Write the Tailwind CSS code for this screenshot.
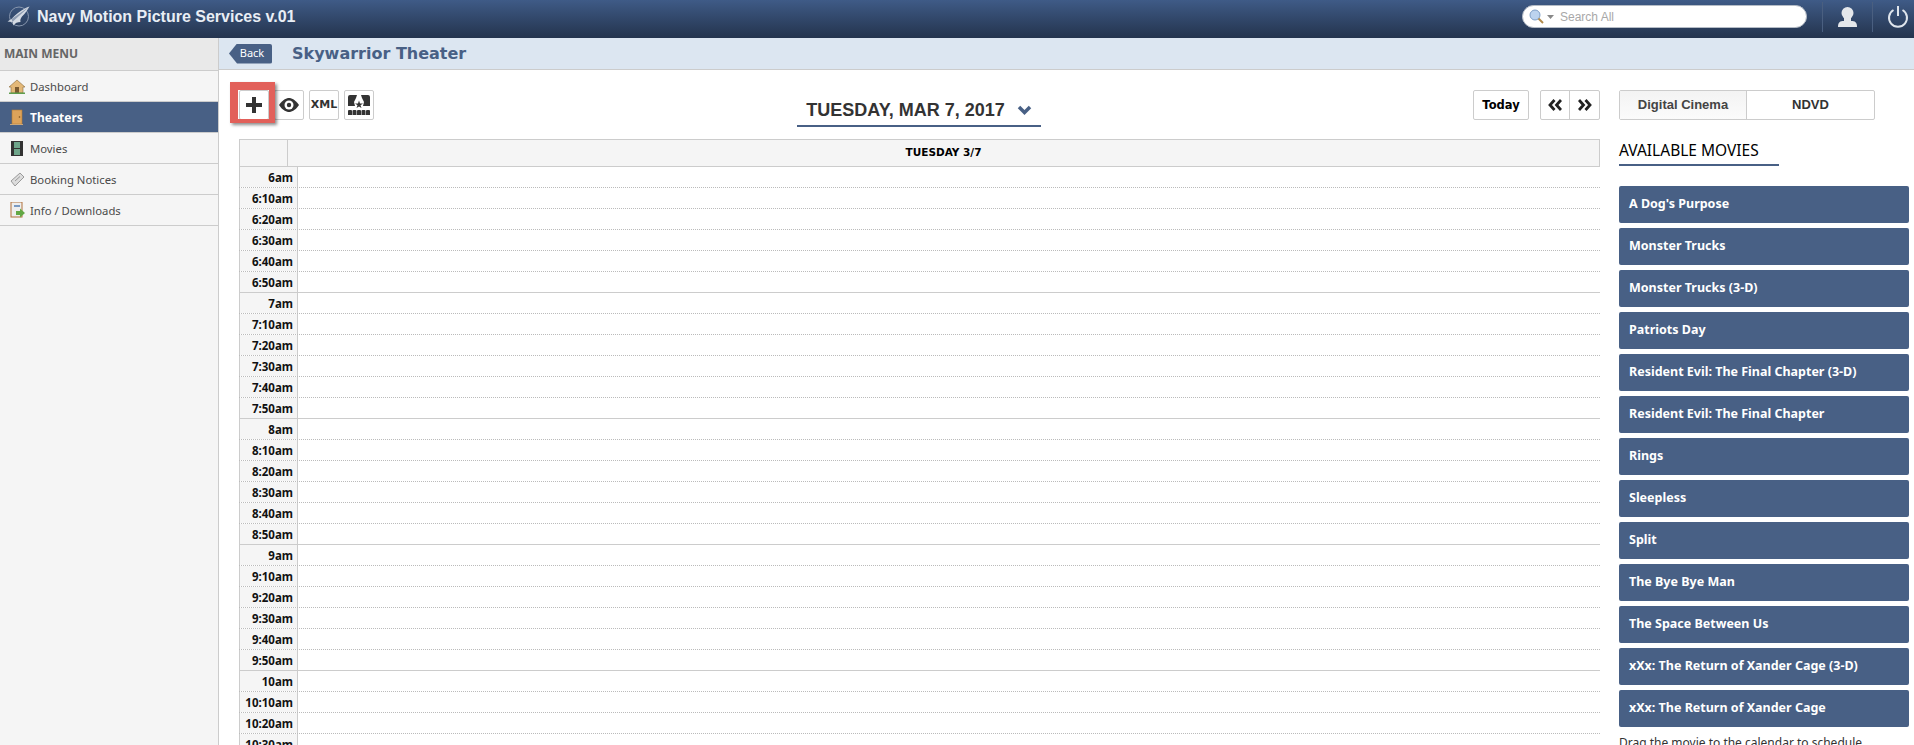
<!DOCTYPE html>
<html lang="en">
<head>
  <meta charset="UTF-8" />
  <title>Navy Motion Picture Services</title>
  <script src="https://cdn.jsdelivr.net/npm/@tailwindcss/browser@4"></script>
</head>
<body class="h-[745px] overflow-hidden bg-white font-['Noto_Sans',sans-serif] text-[#333]">

  <!-- top bar -->
  <header class="h-[38px] pb-[5px] flex items-center bg-gradient-to-b from-[#3f5b87] to-[#24344e]">
    <svg class="ml-[7px] w-[23px] h-[21px]" viewBox="0 0 23 21"><circle cx="12" cy="10.500" r="9.500" fill="none" stroke="#8796ae" stroke-width="1"/><path d="M22.500 0.500 C15 3 8 9 4.500 13 L0.500 15.500 L5.500 16 L6.500 19.500 C8 17 10.500 16 13.500 16 C13 14 13.500 12.500 15 10.500 C18 7.500 20.500 4 22.500 0.500Z" fill="#d5dbe4"/><path d="M22.500 0.500 L7 14.500 L5.500 16 L4.500 13Z" fill="#8f9db3"/></svg>
    <div class="ml-[7px] font-['Liberation_Sans',sans-serif] font-bold text-[16px] text-[#e9eef5]">Navy Motion Picture Services v.01</div>
    <div class="ml-auto w-[285px] h-[23px] flex items-center rounded-full bg-white border border-[#b5bcc6]">
      <svg class="ml-[6px] w-[15px] h-[15px]" viewBox="0 0 15 15"><circle cx="6" cy="6" r="5" fill="#bcd3ee" stroke="#7f9fc6"/><path d="M9.500 9.500 L14 14" stroke="#b08a4a" stroke-width="2"/></svg>
      <svg class="ml-[3px] w-[7px] h-[4px]" viewBox="0 0 7 4"><path d="M0 0H7L3.500 4Z" fill="#888"/></svg>
      <span class="ml-[6px] font-['Liberation_Sans',sans-serif] text-[12px] text-[#a8a8a8]">Search All</span>
    </div>
    <div class="ml-[15px] w-px h-[30px] bg-[#4a5f80]"></div>
    <svg class="ml-[14px] w-[21px] h-[22px]" viewBox="0 0 21 22"><circle cx="10.500" cy="7" r="6" fill="#e4e7eb"/><path d="M7 12 H14 L14 15 C18 15 20 16 20 21 H1 C1 16 3 15 7 15Z" fill="#e4e7eb"/></svg>
    <div class="ml-[14px] w-px h-[30px] bg-[#4a5f80]"></div>
    <svg class="ml-[14px] mr-[5px] w-[22px] h-[22px]" viewBox="0 0 22 22" fill="none" stroke="#dfe5ec" stroke-width="2"><path d="M6.500 4 A9 9 0 1 0 15.500 4"/><path d="M11 0 V10"/></svg>
  </header>

  <div class="flex h-[707px] overflow-hidden">
    <!-- sidebar -->
    <aside class="w-[219px] shrink-0 bg-[#f5f5f5] border-r border-[#ccc] text-[11.300px] text-[#4a4a4a]">
      <div class="h-[33px] flex items-center pl-[4px] bg-[#e9e9e9] border-b border-[#ccc] font-bold text-[12px] text-[#666]">MAIN MENU</div>
      <a class="h-[31px] flex items-center border-b border-[#ccc]">
        <svg class="ml-[9px] w-[16px] h-[15px]" viewBox="0 0 16 15"><path d="M8 1 L0 8 H2 V14 H14 V8 H16Z" fill="#e3b878" stroke="#8a6a3a" stroke-width=".6"/><rect x="6" y="8" width="4" height="6" fill="#7a5a30"/><rect x="0" y="13.500" width="16" height="1.500" fill="#5f9e4e"/></svg>
        <span class="ml-[5px] pt-[2px]">Dashboard</span>
      </a>
      <a class="h-[31px] flex items-center bg-[#486085] border-b border-[#ccc] font-bold text-[12px] text-white">
        <svg class="ml-[10px] w-[13px] h-[16px]" viewBox="0 0 13 16"><rect x="2" y="1" width="10" height="14" fill="#dda35a" stroke="#b27a35" stroke-width=".6"/><circle cx="9.500" cy="8" r=".8" fill="#7a4d1a"/><rect x="0" y="15" width="13" height="1" fill="#c9a77a"/></svg>
        <span class="ml-[7px] pt-[2px]">Theaters</span>
      </a>
      <a class="h-[31px] flex items-center border-b border-[#ccc]">
        <svg class="ml-[11px] w-[12px] h-[15px]" viewBox="0 0 12 15"><rect width="12" height="15" fill="#333"/><rect x="3" y="1" width="6" height="6" fill="#6ea58a"/><rect x="3" y="8" width="6" height="6" fill="#6ea58a"/></svg>
        <span class="ml-[7px] pt-[2px]">Movies</span>
      </a>
      <a class="h-[31px] flex items-center border-b border-[#ccc]">
        <svg class="ml-[10px] w-[15px] h-[15px]" viewBox="0 0 15 15"><path d="M1 9 L10 1 L14 5 L5 14Z" fill="#dcdcdc" stroke="#9a9a9a"/><path d="M5 9 L10 4.500" stroke="#9a9a9a"/></svg>
        <span class="ml-[5px] pt-[2px]">Booking Notices</span>
      </a>
      <a class="h-[31px] flex items-center border-b border-[#ccc]">
        <svg class="ml-[10px] w-[15px] h-[16px]" viewBox="0 0 15 16"><rect x="1" y="0" width="11" height="15" fill="#eee" stroke="#b0703a"/><rect x="4" y="3" width="6" height="2" fill="#7a9ac2"/><path d="M6 9 H10 V6.500 L15 11 L10 15.500 V13 H6Z" fill="#63a845"/></svg>
        <span class="ml-[5px] pt-[2px]">Info / Downloads</span>
      </a>
    </aside>

    <main class="flex-1 min-w-0">
      <!-- title bar -->
      <div class="h-[32px] flex items-center bg-[#dce6f1] border-b border-[#ccc]">
        <div class="ml-[10px] w-[43px] h-[20px] flex items-center justify-center bg-[#486085] rounded-r-[2px] [clip-path:polygon(8px_0,100%_0,100%_100%,8px_100%,0_50%)] pl-[3px] text-[11px] text-white">Back</div>
        <div class="ml-[20px] font-['DejaVu_Sans',sans-serif] font-bold text-[16px] text-[#486085]">Skywarrior Theater</div>
      </div>

      <div class="flex">
        <!-- calendar -->
        <section class="w-[1400px] shrink-0 pl-[20px]">
          <div class="h-[69px] pt-[20px] relative">
            <div class="flex font-['DejaVu_Sans',sans-serif] text-[#333]">
              <button class="w-[30px] h-[30px] flex items-center justify-center rounded-[2px] border border-[#ccc]">
                <svg class="w-[16px] h-[16px]" viewBox="0 0 16 16"><path d="M6 0H10V6H16V10H10V16H6V10H0V6H6Z" fill="#333"/></svg>
              </button>
              <button class="ml-[5px] w-[30px] h-[30px] flex items-center justify-center rounded-[2px] border border-[#ccc]">
                <svg class="w-[20px] h-[14px]" viewBox="0 0 20 14"><path d="M0 7 C4 1 8 0 10 0 C12 0 16 1 20 7 C16 13 12 14 10 14 C8 14 4 13 0 7Z" fill="#333"/><circle cx="10" cy="7" r="4.500" fill="#fff"/><circle cx="10" cy="7" r="2.200" fill="#333"/></svg>
              </button>
              <button class="ml-[5px] w-[30px] h-[30px] flex items-center justify-center rounded-[2px] border border-[#ccc] font-bold text-[11px]">XML</button>
              <button class="ml-[5px] w-[30px] h-[30px] flex items-center justify-center rounded-[2px] border border-[#ccc]">
                <svg class="w-[22px] h-[20px]" viewBox="0 0 22 20" fill="#333"><path d="M2 0 H9 L8 3 L6 7 L7 11 L0 11 V2 Q0 0 2 0Z"/><path d="M20 0 H13 L14 3 L16 7 L15 11 L22 11 V2 Q22 0 20 0Z"/><path d="M11 5.500 L12 8.500 H15 L12.500 10.300 L13.500 13 L11 11.400 L8.500 13 L9.500 10.300 L7 8.500 H10Z"/><path d="M0 20 V16 Q0 15 1 15 H3 Q4 15 4 16 V20Z"/><path d="M4.500 20 V16 Q4.500 15 5.500 15 H7.500 Q8.500 15 8.500 16 V20Z"/><path d="M9 20 V16 Q9 15 10 15 H12 Q13 15 13 16 V20Z"/><path d="M13.500 20 V16 Q13.500 15 14.500 15 H16.500 Q17.500 15 17.500 16 V20Z"/><path d="M18 20 V16 Q18 15 19 15 H21 Q22 15 22 16 V20Z"/></svg>
              </button>
            </div>
            <!-- highlight round the add button -->
            <div class="absolute left-[-9px] top-[12px] w-[45px] h-[41px] border-l-[8px] border-t-[8px] border-r-[6px] border-b-[4px] border-[#e2605a] shadow-[2px_2px_3px_rgba(0,0,0,.45)]"></div>

            <div class="absolute left-[558px] top-[19px] w-[244px] h-[38px] pt-[6px] flex items-center justify-center gap-[12px] border-b-[2px] border-[#486085]">
              <span class="font-['Liberation_Sans',sans-serif] font-bold text-[18px] text-[#333]">TUESDAY, MAR 7, 2017</span>
              <svg class="w-[15px] h-[11px]" viewBox="0 0 15 11"><path d="M2 2 L7.500 7.500 L13 2" fill="none" stroke="#486085" stroke-width="3.500"/></svg>
            </div>

            <div class="absolute left-[1234px] top-[20px] flex font-['DejaVu_Sans',sans-serif] font-bold text-black">
              <button class="w-[56px] h-[30px] pt-[1px] rounded-[2px] border border-[#ccc] text-[11.500px]">Today</button>
              <div class="ml-[11px] flex h-[30px] rounded-[2px] border border-[#ccc]">
                <button class="w-[29px] border-r border-[#ccc] flex items-center justify-center">
                  <svg class="w-[14px] h-[12px]" viewBox="0 0 14 12" fill="none" stroke="#222" stroke-width="2.800"><path d="M6.500 1 L2 6 L6.500 11"/><path d="M13 1 L8.500 6 L13 11"/></svg>
                </button>
                <button class="w-[29px] flex items-center justify-center">
                  <svg class="w-[14px] h-[12px]" viewBox="0 0 14 12" fill="none" stroke="#222" stroke-width="2.800"><path d="M1 1 L5.500 6 L1 11"/><path d="M7.500 1 L12 6 L7.500 11"/></svg>
                </button>
              </div>
            </div>
          </div>

          <div class="w-[1361px] h-[28px] flex bg-[#f5f5f5] border border-[#ccc]">
            <div class="w-[48px] border-r border-[#ccc]"></div>
            <div class="flex-1 flex items-center justify-center font-['DejaVu_Sans',sans-serif] font-bold text-[10.500px] text-black">TUESDAY 3/7</div>
          </div>
          <div id="rows" class="w-[1361px]"></div>
        </section>

        <!-- movie list -->
        <section class="flex-1 min-w-0 pr-[5px] pt-[20px]">
          <div class="flex w-[256px] h-[30px] border border-[#ccc] rounded-[2px] font-['Liberation_Sans',sans-serif] font-bold text-[13px]">
            <div class="w-[127px] flex items-center justify-center bg-gradient-to-b from-[#f3f3f3] to-[#fbfbfb] border-r border-[#ccc] text-[#444]">Digital Cinema</div>
            <div class="flex-1 flex items-center justify-center text-[#333]">NDVD</div>
          </div>
          <h2 class="mt-[20px] w-[160px] h-[26px] border-b-[2px] border-[#486085] text-[15.500px] leading-[20px] text-black">AVAILABLE MOVIES</h2>
          <ul id="movies" class="mt-[20px] flex flex-col gap-[5px]"></ul>
          <p class="mt-[7px] text-[12px] text-[#333]">Drag the movie to the calendar to schedule</p>
        </section>
      </div>
    </main>
  </div>

  <script>
    const movies = ["A Dog's Purpose", "Monster Trucks", "Monster Trucks (3-D)", "Patriots Day", "Resident Evil: The Final Chapter (3-D)", "Resident Evil: The Final Chapter", "Rings", "Sleepless", "Split", "The Bye Bye Man", "The Space Between Us", "xXx: The Return of Xander Cage (3-D)", "xXx: The Return of Xander Cage"];
    const movieList = document.getElementById('movies');
    movies.forEach(title => {
      const li = document.createElement('li');
      li.className = 'h-[37px] flex items-center pl-[10px] rounded-[2px] bg-[#486085] font-bold text-[12.500px] text-white';
      li.textContent = title;
      movieList.appendChild(li);
    });

    const rows = document.getElementById('rows');
    [6, 7, 8, 9, 10].forEach(hour => {
      [0, 10, 20, 30, 40, 50].forEach(min => {
        const row = document.createElement('div');
        row.className = min === 50
          ? 'h-[21px] flex border-b border-solid border-[#ccc]'
          : 'h-[21px] flex border-b border-dotted border-[#bbb]';
        const label = document.createElement('div');
        label.className = 'w-[59px] pr-[4px] text-right bg-[#f5f5f5] border-l border-r border-[#ccc] font-bold text-[11.500px] leading-[21px] text-[#111]';
        label.textContent = min === 0 ? hour + 'am' : hour + ':' + min + 'am';
        row.appendChild(label);
        rows.appendChild(row);
      });
    });
  </script>
</body>
</html>
